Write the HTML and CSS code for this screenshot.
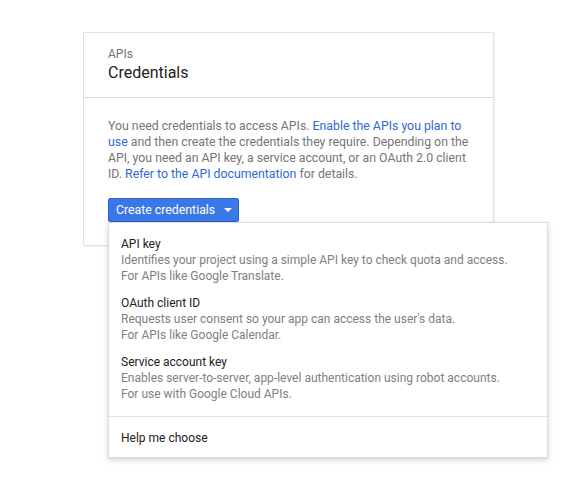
FILE: index.html
```html
<!DOCTYPE html>
<html>
<head>
<meta charset="utf-8">
<link rel="stylesheet" href="styles.css">
</head>
<body>
<div class="page">
  <div class="card">
    <div class="card-header">
      <div class="eyebrow">APIs</div>
      <div class="title">Credentials</div>
    </div>
    <div class="card-body">
      <p class="intro">You need credentials to access APIs. <a href="#">Enable the APIs you plan to use</a> and then create the credentials they require. Depending on the API, you need an API key, a service account, or an OAuth 2.0 client ID. <a href="#">Refer to the API documentation</a> for details.</p>
      <div class="menu-anchor">
        <button class="btn">Create credentials <span class="caret"></span></button>
        <div class="dropdown">
          <div class="menu-section">
            <div class="menu-item">
              <div class="item-title">API key</div>
              <div class="item-desc">Identifies your project using a simple API key to check quota and access.<br>For APIs like Google Translate.</div>
            </div>
            <div class="menu-item">
              <div class="item-title">OAuth client ID</div>
              <div class="item-desc">Requests user consent so your app can access the user's data.<br>For APIs like Google Calendar.</div>
            </div>
            <div class="menu-item">
              <div class="item-title">Service account key</div>
              <div class="item-desc">Enables server-to-server, app-level authentication using robot accounts.<br>For use with Google Cloud APIs.</div>
            </div>
          </div>
          <div class="menu-help">Help me choose</div>
        </div>
      </div>
    </div>
  </div>
</div>
</body>
</html>
```

FILE: styles.css
```css
html, body {
  margin: 0;
  padding: 0;
  background: #fff;
  font-family: Roboto, "Noto Sans", Arial, sans-serif;
}
body {
  min-height: 489px;
}
.page {
  padding: 32px 0 0 83px;
}
.card {
  width: 409px;
  border: 1px solid #e2e2e2;
  box-shadow: 1px 1px 1px rgba(0,0,0,0.04);
  background: #fff;
}
.card-header {
  padding: 13px 24px 13px;
  border-bottom: 1px solid #dadada;
}
.eyebrow {
  font-size: 12px;
  line-height: 16px;
  color: #757575;
}
.title {
  font-size: 16px;
  line-height: 22px;
  color: #212121;
}
.card-body {
  padding: 20px 24px 23px;
}
.intro {
  margin: 0 0 16px;
  font-size: 12.3px;
  line-height: 16px;
  color: #757575;
}
.intro a {
  color: #3367d6;
  text-decoration: none;
}
.menu-anchor {
  position: relative;
}
.btn {
  display: flex;
  align-items: center;
  height: 24px;
  padding: 0 6px 0 7px;
  border: 1px solid #2e63c9;
  border-radius: 2px;
  background: #3b78e7;
  color: #fff;
  font-family: Roboto, "Noto Sans", Arial, sans-serif;
  font-size: 12.3px;
  cursor: pointer;
}
.caret {
  display: inline-block;
  margin-left: 9px;
  width: 0;
  height: 0;
  border-left: 4px solid transparent;
  border-right: 4px solid transparent;
  border-top: 4px solid #fff;
}
.dropdown {
  position: absolute;
  left: 0;
  top: 24px;
  width: 440px;
  background: #fff;
  border: 1px solid #dcdcdc;
  box-shadow: 0 2px 6px rgba(0,0,0,0.18);
  box-sizing: border-box;
  z-index: 2;
}
.menu-section {
  padding: 8px 0 8px;
  border-bottom: 1px solid #e3e3e3;
}
.menu-item {
  padding: 5px 12px 6px;
  font-size: 12px;
  line-height: 16px;
}
.item-title {
  color: #212121;
}
.item-desc {
  color: #808080;
}
.menu-help {
  padding: 13px 12px 11px;
  font-size: 12px;
  line-height: 16px;
  color: #212121;
}
```
